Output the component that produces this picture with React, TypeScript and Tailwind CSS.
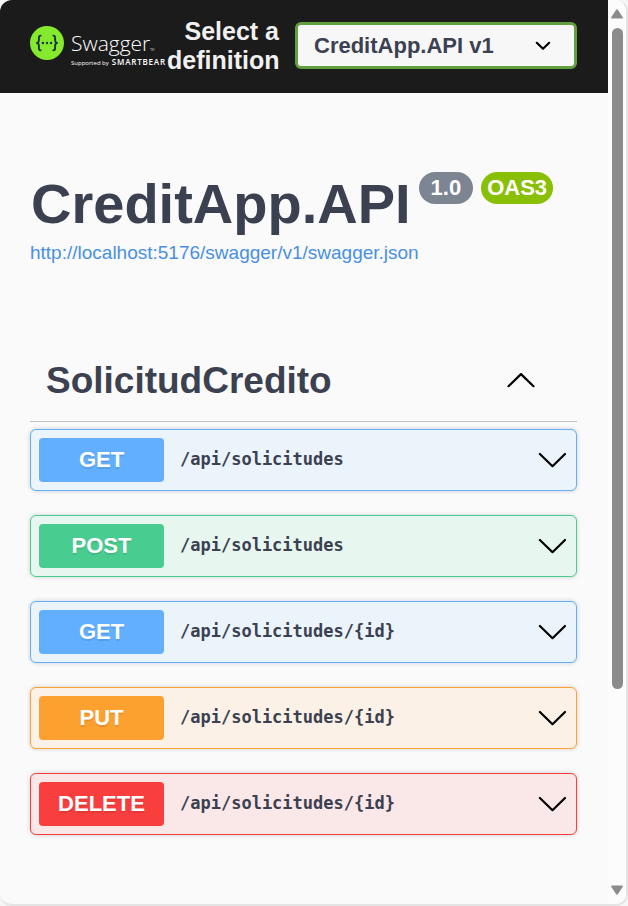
import { useState } from "react";

type Method = "GET" | "POST" | "PUT" | "DELETE";

const operations: { method: Method; path: string }[] = [
  { method: "GET", path: "/api/solicitudes" },
  { method: "POST", path: "/api/solicitudes" },
  { method: "GET", path: "/api/solicitudes/{id}" },
  { method: "PUT", path: "/api/solicitudes/{id}" },
  { method: "DELETE", path: "/api/solicitudes/{id}" },
];

const rowStyles: Record<Method, string> = {
  GET: "border-[#61affe] bg-[#ebf3fb]",
  POST: "border-[#49cc90] bg-[#e8f6f0]",
  PUT: "border-[#fca130] bg-[#fbf1e6]",
  DELETE: "border-[#f93e3e] bg-[#fae7e7]",
};

const badgeStyles: Record<Method, string> = {
  GET: "bg-[#61affe]",
  POST: "bg-[#49cc90]",
  PUT: "bg-[#fca130]",
  DELETE: "bg-[#f93e3e]",
};

function Chevron({ up = false }: { up?: boolean }) {
  return (
    <svg width="28" height="16" viewBox="0 0 28 16" fill="none" stroke="#000" strokeWidth="2.2" strokeLinecap="round" strokeLinejoin="round" aria-hidden="true" className="shrink-0">
      <path d={up ? "M1.5 13.2 14 1.1 26.5 13.2" : "M1.9 2 14.5 14.2 27 2"} />
    </svg>
  );
}

function Logo() {
  return (
    <a href="#top" className="flex items-start gap-[7px] font-['Open_Sans',sans-serif] text-white">
      <svg width="34" height="34" viewBox="0 0 34 34" aria-hidden="true" className="shrink-0">
        <circle cx="17" cy="17" r="17" fill="#85ea2d" />
        <g fill="none" stroke="#173647" strokeWidth="1.9" strokeLinejoin="round">
          <path d="M11.4 9.6H10.6C9.2 9.6 8.9 10.4 8.9 11.7V14C8.9 15.8 8.5 16.8 6.9 17C8.5 17.2 8.9 18.2 8.9 20V22.3C8.9 23.6 9.2 24.4 10.6 24.4H11.4" />
          <path d="M22.6 9.6H23.4C24.8 9.6 25.1 10.4 25.1 11.7V14C25.1 15.8 25.5 16.8 27.1 17C25.5 17.2 25.1 18.2 25.1 20V22.3C25.1 23.6 24.8 24.4 23.4 24.4H22.6" />
        </g>
        <g fill="#173647">
          <circle cx="12.9" cy="17" r="1.2" />
          <circle cx="17" cy="17" r="1.2" />
          <circle cx="21.1" cy="17" r="1.2" />
        </g>
      </svg>
      <span className="flex flex-col pt-1">
        <span className="flex items-baseline text-[21px] leading-[26px] font-light">
          Swagger<span className="text-[3px] leading-none">TM</span>
        </span>
        <span className="flex items-baseline gap-[3px] text-[6px] leading-3 whitespace-nowrap">
          Supported by
          <span className="text-[8px] font-semibold tracking-widest">SMARTBEAR</span>
        </span>
      </span>
    </a>
  );
}

function Scrollbar() {
  return (
    <div aria-hidden="true" className="flex w-[18px] shrink-0 flex-col items-center bg-[#fcfcfc] py-[9px]">
      <svg width="12" height="10" viewBox="0 0 12 10" fill="#8b8b8b">
        <path d="M5 1Q6-.4 7 1L11.6 8Q12.2 9.6 11 9.6H1Q-.2 9.6.4 8Z" />
      </svg>
      <div className="my-[9px] w-[11px] grow">
        <div className="h-[78%] rounded-full bg-[#8b8b8b]" />
      </div>
      <svg width="12" height="10" viewBox="0 0 12 10" fill="#8b8b8b">
        <path d="M5 9Q6 10.4 7 9L11.6 2Q12.2.4 11 .4H1Q-.2.4.4 2Z" />
      </svg>
    </div>
  );
}

export default function App() {
  const [open, setOpen] = useState(true);

  return (
    <div id="top" className="flex min-h-screen bg-[#f6f6f6] font-['Liberation_Sans',Arial,sans-serif] text-[#3b4151]">
      <div className="flex grow overflow-hidden rounded-xl border-r-2 border-b-2 border-[#e4e4e4] bg-[#fafafa]">
        <div className="min-w-0 grow">
          <header className="flex h-[93px] items-center bg-[#1b1b1b] pr-[31px] pb-0.5 pl-[30px]">
            <div className="w-[137px] shrink-0 pt-1">
              <Logo />
            </div>
            <label htmlFor="definition" className="w-28 shrink-0 text-right text-[25px] leading-[29px] font-bold text-[#f0f0f0]">
              Select a definition
            </label>
            <div className="relative ml-4 grow">
              <select id="definition" className="block h-[47px] w-full appearance-none rounded-md border-3 border-[#62a03f] bg-[#f7f7f7] pr-12 pl-4 text-[22px] font-bold">
                <option>CreditApp.API v1</option>
              </select>
              <svg width="16" height="10" viewBox="0 0 16 10" fill="none" stroke="#000" strokeWidth="2.2" strokeLinecap="round" strokeLinejoin="round" aria-hidden="true" className="pointer-events-none absolute top-[19px] right-[26px]">
                <path d="M1.8 1.8 8 7.8 14.2 1.8" />
              </svg>
            </div>
          </header>

          <main className="pr-[31px] pl-[30px]">
            <section className="pt-[78px]">
              <div className="flex items-start gap-2">
                <h1 className="pl-px text-[56px] leading-[66px] font-bold">CreditApp.API</h1>
                <span className="mt-px rounded-full bg-[#7d8492] px-3 text-[22px] leading-8 font-bold text-white">1.0</span>
                <span className="mt-px rounded-full bg-[#89bf04] px-1.5 text-[22px] leading-8 font-bold text-white">OAS3</span>
              </div>
              <a href="http://localhost:5176/swagger/v1/swagger.json" className="mt-1 block text-[19px] leading-6 text-[#4990e2]">
                http://localhost:5176/swagger/v1/swagger.json
              </a>
            </section>

            <section className="mt-[76px]">
              <h2 className="border-b border-[#c1c2c4]">
                <button type="button" aria-expanded={open} onClick={() => setOpen(!open)} className="flex h-20 w-full items-center justify-between pr-[42px] pl-4 text-left text-[37px] font-bold">
                  SolicitudCredito
                  <Chevron up={open} />
                </button>
              </h2>
              {open && (
                <ul className="mt-[7px] flex flex-col gap-6 pb-10">
                  {operations.map(({ method, path }) => (
                    <li key={method + path}>
                      <button type="button" className={`flex h-[62px] w-full items-center rounded-md border pr-2.5 pl-2 text-left shadow-[0_0_4px_rgba(0,0,0,0.19)] ${rowStyles[method]}`}>
                        <span className={`w-[125px] shrink-0 rounded text-center text-[22px] leading-[44px] font-bold text-white [text-shadow:0_2px_0_rgba(0,0,0,0.1)] ${badgeStyles[method]}`}>
                          {method}
                        </span>
                        <span className="grow pl-4 font-['DejaVu_Sans_Mono',monospace] text-[17px] font-bold">{path}</span>
                        <Chevron />
                      </button>
                    </li>
                  ))}
                </ul>
              )}
            </section>
          </main>
        </div>
        <Scrollbar />
      </div>
    </div>
  );
}
